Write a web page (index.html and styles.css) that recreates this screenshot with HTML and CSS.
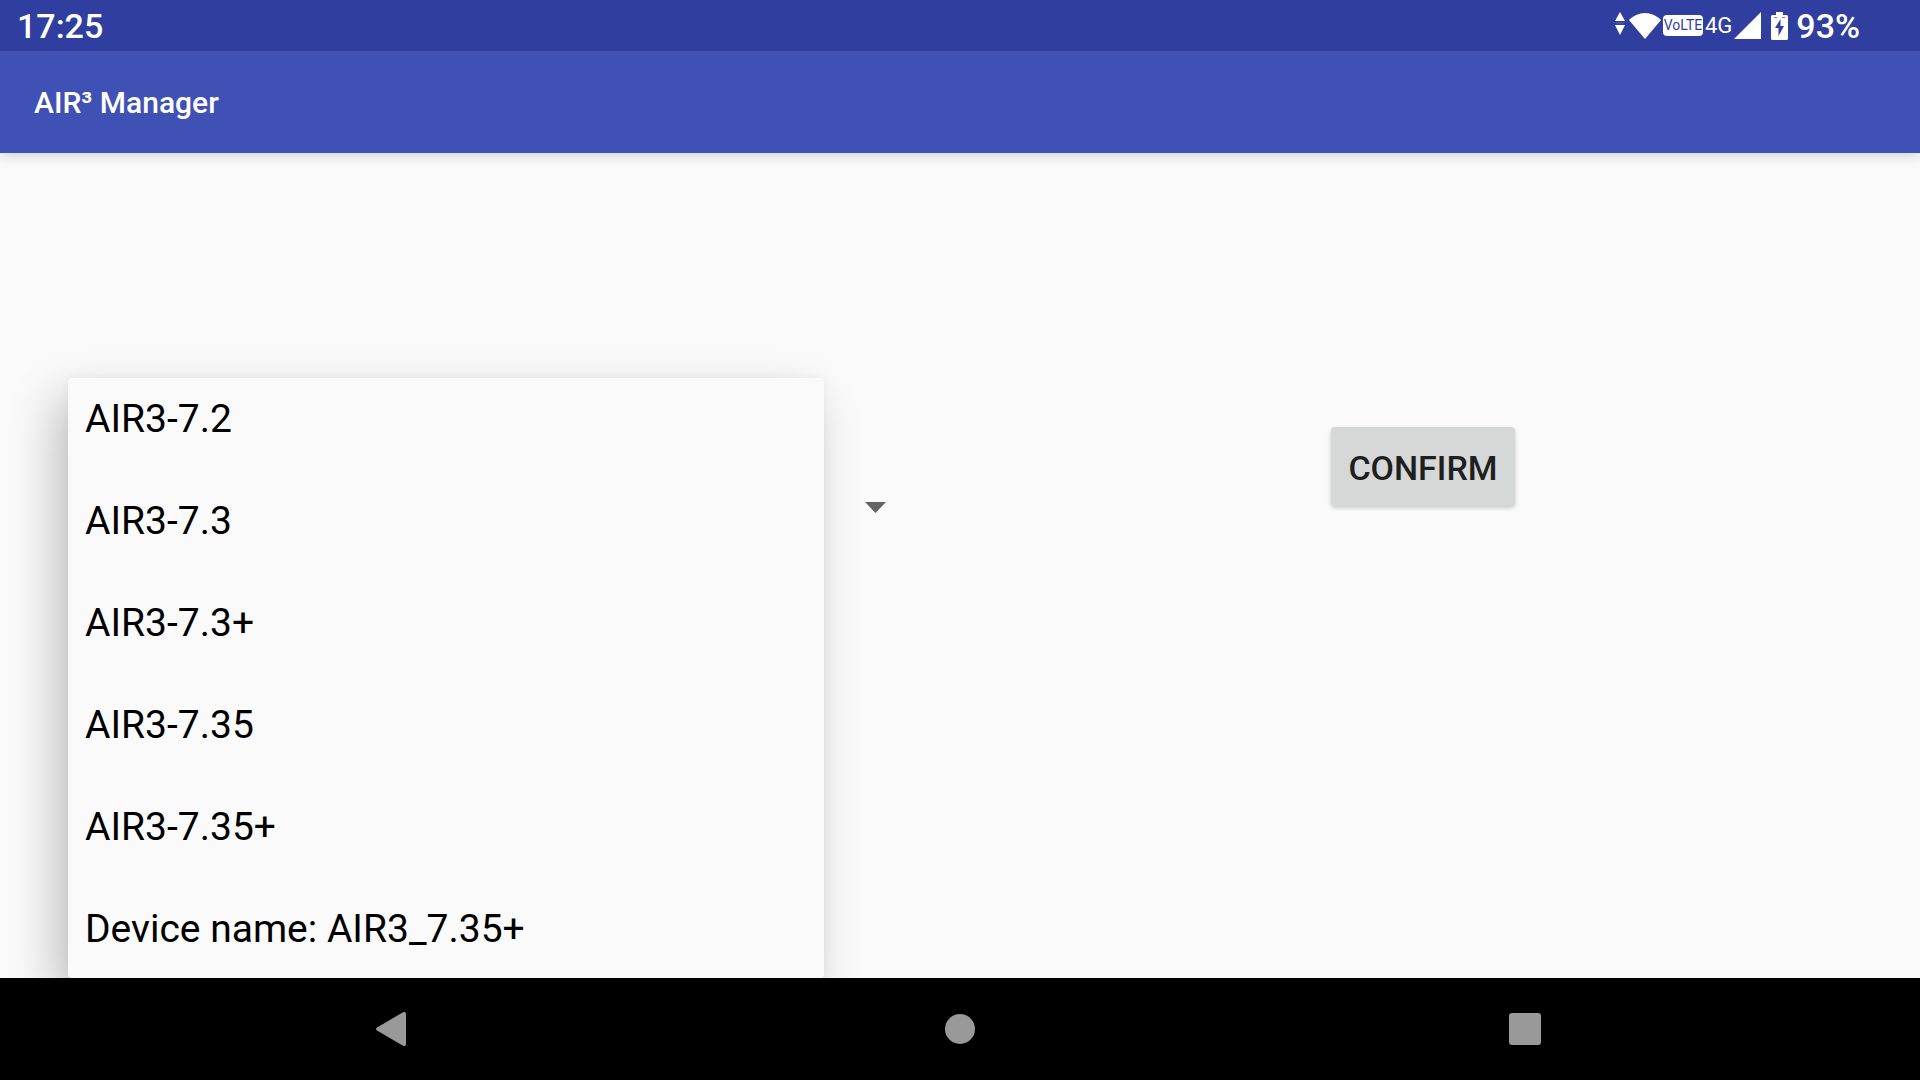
FILE: index.html
```
<!DOCTYPE html>
<html lang="en">

<head>
    <meta charset="UTF-8">
    <meta name="viewport" content="width=device-width, initial-scale=1">
    <title>AIR³ Manager</title>
    <link rel="stylesheet" href="styles.css">
</head>

<body>
    <div class="status-bar">
        <span class="clock">17:25</span>
        <div class="status-icons">
            <svg class="icon-data" width="10" height="28" viewBox="0 0 10 28">
                <path d="M5 0l5 9H0zM5 23l5-10H0z" fill="#fff"/>
                <path d="M1 11h8" stroke="#fff" stroke-opacity="0.2"/>
            </svg>
            <svg class="icon-wifi" width="32" height="26" viewBox="0 0 32 26">
                <path d="M16 26L0 7C4 3 10 0 16 0s12 3 16 7z" fill="#fff"/>
            </svg>
            <span class="volte">VoLTE</span>
            <span class="network">4G</span>
            <svg class="icon-signal" width="27" height="27" viewBox="0 0 27 27">
                <path d="M27 0v27H0z" fill="#fff"/>
            </svg>
            <svg class="icon-battery" width="17" height="28" viewBox="0 0 17 28">
                <path d="M5 0h7v3h3.500a1.500 1.500 0 0 1 1.500 1.500v22a1.500 1.500 0 0 1-1.500 1.500h-14A1.500 1.500 0 0 1 0 26.500v-22A1.500 1.500 0 0 1 1.500 3H5z" fill="#fff"/>
                <path d="M9.500 7v7h3.500L7.500 24v-8H4z" fill="#303f9f"/>
                <path d="M3 5.500h3M11 5.500h3" stroke="#303f9f" stroke-opacity="0.7"/>
            </svg>
            <span class="battery-level">93%</span>
        </div>
    </div>

    <header class="app-bar">
        <h1>AIR³ Manager</h1>
    </header>

    <main>
        <form class="device-form">
            <div class="device-column">
                <button type="button" class="spinner" aria-label="Device" aria-expanded="true" aria-controls="device">
                    <svg width="21" height="11" viewBox="0 0 21 11">
                        <path d="M0 0h21L10.500 11z" fill="#636363"/>
                    </svg>
                </button>
                <select id="device" class="device-list" name="device" size="6" aria-label="Device">
                    <option>AIR3-7.2</option>
                    <option>AIR3-7.3</option>
                    <option>AIR3-7.3+</option>
                    <option>AIR3-7.35</option>
                    <option>AIR3-7.35+</option>
                    <option>Device name: AIR3_7.35+</option>
                </select>
            </div>
            <div class="confirm-column">
                <button type="submit" class="confirm">CONFIRM</button>
            </div>
        </form>
    </main>

    <nav class="nav-bar">
        <button type="button" aria-label="Back">
            <svg width="40" height="36" viewBox="0 0 40 36">
                <path d="M2 16.500L28 1.300q3-1.300 3 1.700v30q0 3-3 1.700L2 19.500q-2-1.500 0-3z" fill="#999"/>
            </svg>
        </button>
        <button type="button" aria-label="Home">
            <svg width="30" height="30" viewBox="0 0 30 30">
                <circle cx="15" cy="15" r="15" fill="#999"/>
            </svg>
        </button>
        <button type="button" aria-label="Recent apps">
            <svg width="32" height="32" viewBox="0 0 32 32">
                <rect width="32" height="32" rx="3" fill="#999"/>
            </svg>
        </button>
    </nav>
</body>

</html>
```
FILE: styles.css
```
* {
    box-sizing: border-box;
}

body {
    margin: 0;
    min-height: 100vh;
    display: flex;
    flex-direction: column;
    background-color: #fafafa;
    font-family: Roboto, sans-serif;
}

button {
    border: none;
    padding: 0;
    background: none;
    font-family: inherit;
    cursor: pointer;
}

svg {
    display: block;
}

.status-bar {
    position: relative;
    z-index: 2;
    display: flex;
    align-items: center;
    justify-content: space-between;
    height: 51px;
    padding: 0 60px 0 17px;
    background-color: #303f9f;
    color: #fff;
}

.clock,
.battery-level {
    font-size: 34px;
    font-weight: 500;
    line-height: 50px;
}

.status-icons {
    display: flex;
    align-items: center;
    gap: 2px;
}

.icon-data {
    margin-right: 2px;
}

.volte {
    width: 40px;
    border-radius: 4px;
    background-color: #fff;
    color: #303f9f;
    font-size: 14px;
    line-height: 21px;
    text-align: center;
}

.network {
    font-size: 22px;
    line-height: 50px;
}

.icon-battery {
    margin: 0 6px 0 8px;
}

.app-bar {
    position: relative;
    z-index: 1;
    display: flex;
    align-items: center;
    height: 102px;
    padding: 0 34px;
    background-color: #3f51b5;
    box-shadow: 0 2px 12px rgba(0, 0, 0, 0.18);
}

h1 {
    margin: 0;
    color: #fff;
    font-size: 30px;
    font-weight: 500;
}

main {
    flex: 1;
    display: flex;
    overflow: hidden;
}

.device-form {
    flex: 1;
    display: grid;
    grid-template-columns: 926fr 994fr;
}

.device-column {
    position: relative;
    padding: 303px 25px 0 68px;
}

.spinner {
    display: flex;
    align-items: center;
    justify-content: flex-end;
    width: 100%;
    height: 102px;
    padding-right: 15px;
}

/* open list, lies over the spinner */
.device-list {
    position: absolute;
    top: 225px;
    right: 102px;
    bottom: 0;
    left: 68px;
    height: auto;
    margin: 0;
    padding: 0;
    border: none;
    border-radius: 4px;
    outline: none;
    overflow: hidden;
    background-color: #fafafa;
    color: #000;
    font-family: inherit;
    font-size: 39px;
    box-shadow: -12px 20px 48px rgba(0, 0, 0, 0.24), 0 0 8px rgba(0, 0, 0, 0.05);
}

.device-list option {
    min-height: 0;
    padding: 28px 17px;
}

.device-list option:first-child {
    padding-top: 18px;
}

.confirm-column {
    padding-top: 274px;
    text-align: center;
}

.confirm {
    height: 79px;
    padding: 2px 17px 0;
    border-radius: 4px;
    background-color: #d6d7d7;
    color: #1e1f1f;
    font-size: 34px;
    font-weight: 500;
    box-shadow: 0 2px 4px rgba(0, 0, 0, 0.2);
}

.nav-bar {
    display: flex;
    justify-content: center;
    gap: 463px;
    height: 102px;
    background-color: #000;
}

.nav-bar button {
    display: flex;
    align-items: center;
    justify-content: center;
    width: 102px;
}
```
